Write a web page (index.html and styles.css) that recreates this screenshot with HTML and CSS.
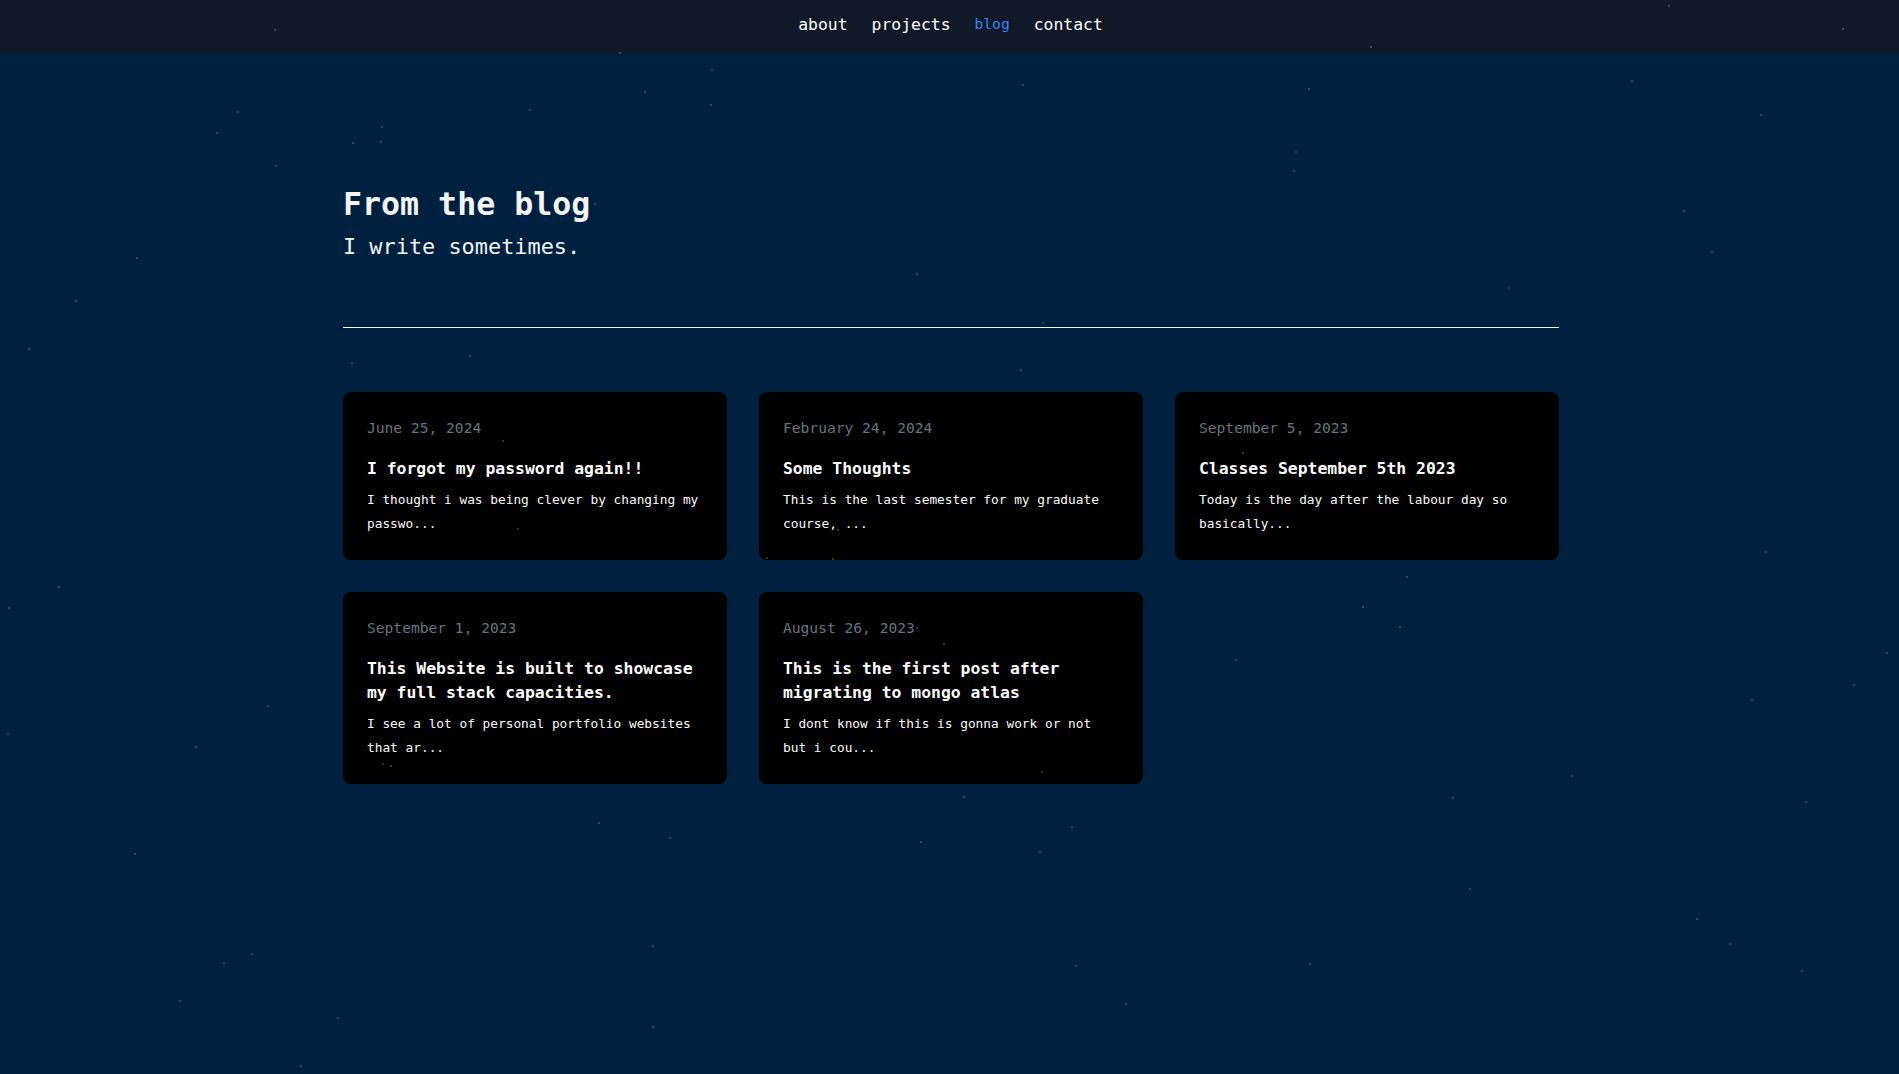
FILE: index.html
```html
<!DOCTYPE html>
<html lang="en">
<head>
<meta charset="utf-8">
<title>Blog</title>
<link rel="stylesheet" href="styles.css">
</head>
<body>
<nav class="topnav">
  <a class="navlink" href="#">about</a>
  <a class="navlink" href="#">projects</a>
  <a class="navlink navlink-active" href="#">blog</a>
  <a class="navlink" href="#">contact</a>
</nav>
<main class="page">
  <header class="intro">
    <h1 class="intro-title">From the blog</h1>
    <p class="intro-sub">I write sometimes.</p>
  </header>
  <hr class="divider">
  <section class="posts">
    <article class="post">
      <div class="post-date">June 25, 2024</div>
      <h2 class="post-title">I forgot my password again!!</h2>
      <p class="post-body">I thought i was being clever by changing my passwo...</p>
    </article>
    <article class="post">
      <div class="post-date">February 24, 2024</div>
      <h2 class="post-title">Some Thoughts</h2>
      <p class="post-body">This is the last semester for my graduate course, ...</p>
    </article>
    <article class="post">
      <div class="post-date">September 5, 2023</div>
      <h2 class="post-title">Classes September 5th 2023</h2>
      <p class="post-body">Today is the day after the labour day so basically...</p>
    </article>
    <article class="post">
      <div class="post-date">September 1, 2023</div>
      <h2 class="post-title">This Website is built to showcase my full stack capacities.</h2>
      <p class="post-body">I see a lot of personal portfolio websites that ar...</p>
    </article>
    <article class="post">
      <div class="post-date">August 26, 2023</div>
      <h2 class="post-title">This is the first post after migrating to mongo atlas</h2>
      <p class="post-body">I dont know if this is gonna work or not but i cou...</p>
    </article>
  </section>
</main>
<div class="stars" aria-hidden="true">
  <i class="star" style="left:274px;top:29px"></i>
  <i class="star" style="left:619px;top:52px"></i>
  <i class="star" style="left:711px;top:69px"></i>
  <i class="star" style="left:644px;top:91px"></i>
  <i class="star" style="left:710px;top:104px"></i>
  <i class="star" style="left:529px;top:109px"></i>
  <i class="star" style="left:237px;top:111px"></i>
  <i class="star" style="left:216px;top:132px"></i>
  <i class="star" style="left:381px;top:126px"></i>
  <i class="star" style="left:380px;top:141px"></i>
  <i class="star" style="left:275px;top:165px"></i>
  <i class="star" style="left:352px;top:142px"></i>
  <i class="star" style="left:1022px;top:84px"></i>
  <i class="star" style="left:1308px;top:88px"></i>
  <i class="star" style="left:1370px;top:46px"></i>
  <i class="star" style="left:1668px;top:5px"></i>
  <i class="star" style="left:1631px;top:80px"></i>
  <i class="star" style="left:1760px;top:114px"></i>
  <i class="star" style="left:1842px;top:28px"></i>
  <i class="star" style="left:1295px;top:151px"></i>
  <i class="star" style="left:1293px;top:170px"></i>
  <i class="star" style="left:1683px;top:210px"></i>
  <i class="star" style="left:1711px;top:251px"></i>
  <i class="star" style="left:1508px;top:287px"></i>
  <i class="star" style="left:916px;top:273px"></i>
  <i class="star" style="left:1042px;top:322px"></i>
  <i class="star" style="left:136px;top:257px"></i>
  <i class="star" style="left:75px;top:300px"></i>
  <i class="star" style="left:28px;top:348px"></i>
  <i class="star" style="left:351px;top:362px"></i>
  <i class="star" style="left:469px;top:355px"></i>
  <i class="star" style="left:1020px;top:369px"></i>
  <i class="star" style="left:1242px;top:452px"></i>
  <i class="star" style="left:1765px;top:551px"></i>
  <i class="star" style="left:1406px;top:576px"></i>
  <i class="star" style="left:1362px;top:606px"></i>
  <i class="star" style="left:1399px;top:626px"></i>
  <i class="star" style="left:58px;top:586px"></i>
  <i class="star" style="left:8px;top:607px"></i>
  <i class="star" style="left:1235px;top:659px"></i>
  <i class="star" style="left:1886px;top:652px"></i>
  <i class="star" style="left:1853px;top:684px"></i>
  <i class="star" style="left:1751px;top:699px"></i>
  <i class="star" style="left:1571px;top:775px"></i>
  <i class="star" style="left:1452px;top:797px"></i>
  <i class="star" style="left:1805px;top:801px"></i>
  <i class="star" style="left:1469px;top:888px"></i>
  <i class="star" style="left:1696px;top:918px"></i>
  <i class="star" style="left:1729px;top:943px"></i>
  <i class="star" style="left:1801px;top:970px"></i>
  <i class="star" style="left:1309px;top:963px"></i>
  <i class="star" style="left:1075px;top:965px"></i>
  <i class="star" style="left:1125px;top:1003px"></i>
  <i class="star" style="left:652px;top:945px"></i>
  <i class="star" style="left:652px;top:1026px"></i>
  <i class="star" style="left:223px;top:962px"></i>
  <i class="star" style="left:251px;top:953px"></i>
  <i class="star" style="left:179px;top:1000px"></i>
  <i class="star" style="left:337px;top:1017px"></i>
  <i class="star" style="left:300px;top:1065px"></i>
  <i class="star" style="left:1039px;top:851px"></i>
  <i class="star" style="left:1071px;top:826px"></i>
  <i class="star" style="left:920px;top:841px"></i>
  <i class="star" style="left:598px;top:822px"></i>
  <i class="star" style="left:669px;top:837px"></i>
  <i class="star" style="left:963px;top:796px"></i>
  <i class="star" style="left:1041px;top:771px"></i>
  <i class="star" style="left:195px;top:746px"></i>
  <i class="star" style="left:7px;top:733px"></i>
  <i class="star" style="left:134px;top:853px"></i>
  <i class="star" style="left:267px;top:705px"></i>
  <i class="star" style="left:837px;top:529px"></i>
  <i class="star" style="left:517px;top:528px"></i>
  <i class="star" style="left:502px;top:440px"></i>
  <i class="star" style="left:668px;top:508px"></i>
  <i class="star" style="left:382px;top:763px"></i>
  <i class="star" style="left:390px;top:765px"></i>
  <i class="star" style="left:916px;top:627px"></i>
  <i class="star" style="left:943px;top:643px"></i>
  <i class="star" style="left:766px;top:557px"></i>
  <i class="star" style="left:832px;top:558px"></i>
  <i class="star" style="left:594px;top:203px"></i>
</div>
</body>
</html>
```
FILE: styles.css
```css
html, body {
  margin: 0;
  padding: 0;
}

body {
  background: #00203f;
  color: #ffffff;
  font-family: "DejaVu Sans Mono", "Liberation Mono", monospace;
  min-height: 1074px;
  position: relative;
  overflow: hidden;
}

.topnav {
  height: 54px;
  background: #111827;
  display: flex;
  justify-content: center;
  align-items: flex-start;
  gap: 24px;
  padding-top: 13px;
  padding-left: 2px;
  box-sizing: border-box;
}

.navlink {
  color: #ffffff;
  text-decoration: none;
  font-size: 16.4px;
  line-height: 24px;
}

.navlink-active {
  color: #3b82f6;
  font-size: 14.6px;
  margin-top: -1px;
}

.page {
  width: 1216px;
  margin-left: calc(50% - 606.5px);
  padding-top: 130px;
}

.intro-title {
  margin: 0;
  font-size: 31.6px;
  line-height: 40px;
  font-weight: bold;
  color: #f3f4f6;
}

.intro-sub {
  margin: 9px 0 0;
  font-size: 21.9px;
  line-height: 28px;
  color: #f3f4f6;
}

.divider {
  margin: 66px 0 0;
  border: 0;
  height: 1px;
  background: #f3f4f6;
}

.posts {
  margin-top: 64px;
  display: grid;
  grid-template-columns: repeat(3, 1fr);
  gap: 32px;
  align-items: start;
}

.post {
  background: #000000;
  border-radius: 8px;
  padding: 24px;
}

.post-date {
  font-size: 14.6px;
  line-height: 24px;
  color: #6b7280;
}

.post-title {
  margin: 17px 0 0;
  font-size: 16.4px;
  line-height: 24px;
  font-weight: bold;
  color: #ffffff;
}

.post-body {
  margin: 7px 0 0;
  font-size: 12.8px;
  line-height: 24px;
  color: #f9fafb;
}

.stars {
  position: absolute;
  inset: 0;
  pointer-events: none;
}

.star {
  position: absolute;
  width: 2px;
  height: 2px;
  border-radius: 1px;
  background: rgba(200, 212, 235, 0.3);
}
```
